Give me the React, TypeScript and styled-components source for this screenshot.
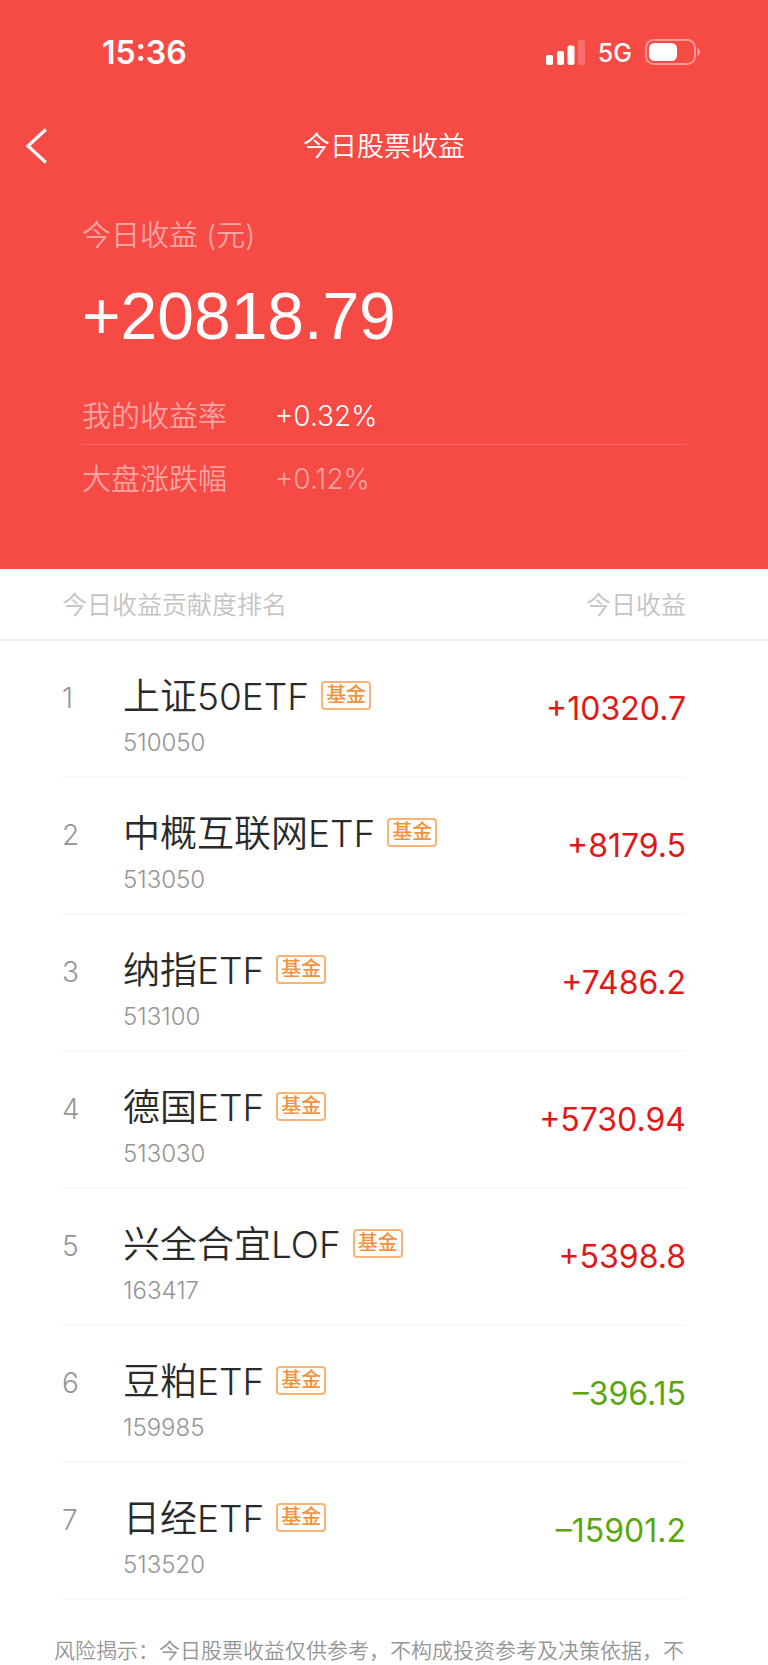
import React from "react";
import styled, { createGlobalStyle } from "styled-components";

const GlobalStyle = createGlobalStyle`
  *, *::before, *::after { box-sizing: border-box; }
  body {
    margin: 0;
    background: #fff;
    font-family: Inter, "Noto Sans CJK SC", sans-serif;
    color: #2a2a2a;
  }
`;

const Page = styled.main`
  width: 100%;
  overflow-x: hidden;
`;

const Hero = styled.header`
  background: #f64a45;
  color: #fff;
  padding-bottom: 62px;
`;

const StatusBar = styled.div`
  display: flex;
  align-items: center;
  justify-content: space-between;
  height: 104px;
  padding: 0 67px 0 102px;
`;

const Clock = styled.time`
  padding-top: 2px;
  font-size: 32px;
  font-weight: 600;
  line-height: 40px;
`;

const StatusIcons = styled.div`
  display: flex;
  align-items: center;
  gap: 13px;
`;

const Network = styled.span`
  padding-top: 2px;
  font-size: 25px;
  font-weight: 500;
  line-height: 32px;
`;

const NavBar = styled.nav`
  display: grid;
  grid-template-columns: 64px 1fr 64px;
  align-items: center;
  height: 84px;
`;

const BackButton = styled.button`
  display: flex;
  width: 64px;
  height: 64px;
  padding: 14px 0 14px 24px;
  border: 0;
  background: none;
  color: inherit;
  cursor: pointer;
`;

const Title = styled.h1`
  margin: 0;
  padding-top: 2px;
  text-align: center;
  font-size: 27px;
  font-weight: 350;
  line-height: 40px;
`;

const Summary = styled.section`
  padding: 28px 82px 0;
`;

const SummaryLabel = styled.h2`
  margin: 0;
  font-size: 29px;
  font-weight: 350;
  line-height: 40px;
  color: #fba4a2;
`;

const Total = styled.p`
  margin: 20px 0 26px;
  font-family: "Liberation Sans", sans-serif;
  font-size: 66px;
  line-height: 80px;
`;

const Rates = styled.dl`
  margin: 0;
`;

const RateRow = styled.div<{ $muted?: boolean }>`
  display: flex;
  padding-top: 7px;
  font-size: 29px;
  line-height: 55px;
  color: ${(p) => (p.$muted ? "#fba4a2" : "#fff")};

  & + & {
    border-top: 1px solid #f96460;
  }
`;

const RateName = styled.dt`
  width: 193px;
  font-weight: 350;
  color: #fba4a2;
`;

const RateValue = styled.dd`
  margin: 0;
  font-size: 28px;
  font-weight: 350;
`;

const Ranking = styled.table`
  display: block;
  width: 100%;
`;

const RankingHead = styled.thead`
  display: block;
`;

const RankingBody = styled.tbody`
  display: block;
`;

const HeadRow = styled.tr`
  display: flex;
  align-items: center;
  justify-content: space-between;
  height: 72px;
  padding: 0 82px 0 62px;
  border-bottom: 2px solid #efefef;
`;

const HeadCell = styled.th`
  padding: 2px 0 0;
  font-size: 25px;
  font-weight: 350;
  line-height: 36px;
  color: #c3c3c3;
`;

const Row = styled.tr`
  display: flex;
  height: 137px;
  margin: 0 82px 0 62px;
  padding-top: 32px;
  border-bottom: 2px solid #f8f8f8;
`;

const Rank = styled.td`
  width: 61px;
  padding: 0;
  font-size: 28px;
  font-weight: 350;
  line-height: 50px;
  color: #959595;
`;

const Fund = styled.td`
  flex: 1;
  padding: 0;
`;

const NameLine = styled.div`
  display: flex;
  align-items: center;
  gap: 12px;
  height: 48px;
`;

const FundName = styled.span`
  font-size: 37px;
  font-weight: 350;
  line-height: 48px;
  white-space: nowrap;
`;

const Tag = styled.span`
  height: 29px;
  margin-bottom: 4px;
  padding: 0 3px;
  border: 2px solid #fbb277;
  border-radius: 4px;
  font-size: 20px;
  font-weight: 500;
  line-height: 25px;
  color: #f5913a;
`;

const Code = styled.div`
  padding-top: 2px;
  font-size: 24px;
  font-weight: 350;
  line-height: 40px;
  color: #959595;
`;

const Amount = styled.td<{ $loss: boolean }>`
  padding: 12px 0 0;
  font-size: 32px;
  font-weight: 375;
  line-height: 48px;
  color: ${(p) => (p.$loss ? "#5ba60f" : "#e01818")};
`;

const Notice = styled.p`
  margin: 0;
  padding: 38px 54px 0;
  font-size: 21px;
  font-weight: 350;
  line-height: 26px;
  color: #959595;
`;

const funds = [
  { name: "上证50ETF", code: "510050", amount: "+10320.7" },
  { name: "中概互联网ETF", code: "513050", amount: "+8179.5" },
  { name: "纳指ETF", code: "513100", amount: "+7486.2" },
  { name: "德国ETF", code: "513030", amount: "+5730.94" },
  { name: "兴全合宜LOF", code: "163417", amount: "+5398.8" },
  { name: "豆粕ETF", code: "159985", amount: "–396.15" },
  { name: "日经ETF", code: "513520", amount: "–15901.2" },
];

const SignalIcon = () => (
  <svg width="39" height="25" viewBox="0 0 39 25" fill="currentColor" aria-hidden="true">
    <rect x="0" y="15" width="7" height="10" rx="2" />
    <rect x="11" y="11" width="7" height="14" rx="2" />
    <rect x="21.5" y="5.500" width="7" height="19.500" rx="2" />
    <rect x="32" y="0" width="7" height="25" rx="2" opacity=".2" />
  </svg>
);

const BatteryIcon = () => (
  <svg width="56" height="26" viewBox="0 0 56 26" aria-hidden="true">
    <rect x="1" y="1" width="49" height="24" rx="7.500" fill="none" stroke="#fff" strokeOpacity=".42" strokeWidth="2" />
    <rect x="4" y="4" width="28" height="18" rx="5.500" fill="#fff" />
    <path d="M52.500 9c3.300 1.600 3.300 6.400 0 8z" fill="#fff" opacity=".5" />
  </svg>
);

const BackIcon = () => (
  <svg width="24" height="36" viewBox="0 0 24 36" fill="none" stroke="currentColor" strokeWidth="3.200" aria-hidden="true">
    <path d="M21.800 1.500 4 18l17.800 16.500" />
  </svg>
);

export default function App() {
  return (
    <>
      <GlobalStyle />
      <Page>
        <Hero>
          <StatusBar>
            <Clock>15:36</Clock>
            <StatusIcons>
              <SignalIcon />
              <Network>5G</Network>
              <BatteryIcon />
            </StatusIcons>
          </StatusBar>
          <NavBar>
            <BackButton type="button" aria-label="返回">
              <BackIcon />
            </BackButton>
            <Title>今日股票收益</Title>
          </NavBar>
          <Summary>
            <SummaryLabel>今日收益 (元)</SummaryLabel>
            <Total>+20818.79</Total>
            <Rates>
              <RateRow>
                <RateName>我的收益率</RateName>
                <RateValue>+0.32%</RateValue>
              </RateRow>
              <RateRow $muted>
                <RateName>大盘涨跌幅</RateName>
                <RateValue>+0.12%</RateValue>
              </RateRow>
            </Rates>
          </Summary>
        </Hero>
        <Ranking>
          <RankingHead>
            <HeadRow>
              <HeadCell scope="col">今日收益贡献度排名</HeadCell>
              <HeadCell scope="col">今日收益</HeadCell>
            </HeadRow>
          </RankingHead>
          <RankingBody>
            {funds.map((fund, i) => (
              <Row key={fund.code}>
                <Rank>{i + 1}</Rank>
                <Fund>
                  <NameLine>
                    <FundName>{fund.name}</FundName>
                    <Tag>基金</Tag>
                  </NameLine>
                  <Code>{fund.code}</Code>
                </Fund>
                <Amount $loss={fund.amount.startsWith("–")}>{fund.amount}</Amount>
              </Row>
            ))}
          </RankingBody>
        </Ranking>
        <Notice>风险揭示：今日股票收益仅供参考，不构成投资参考及决策依据，不</Notice>
      </Page>
    </>
  );
}
